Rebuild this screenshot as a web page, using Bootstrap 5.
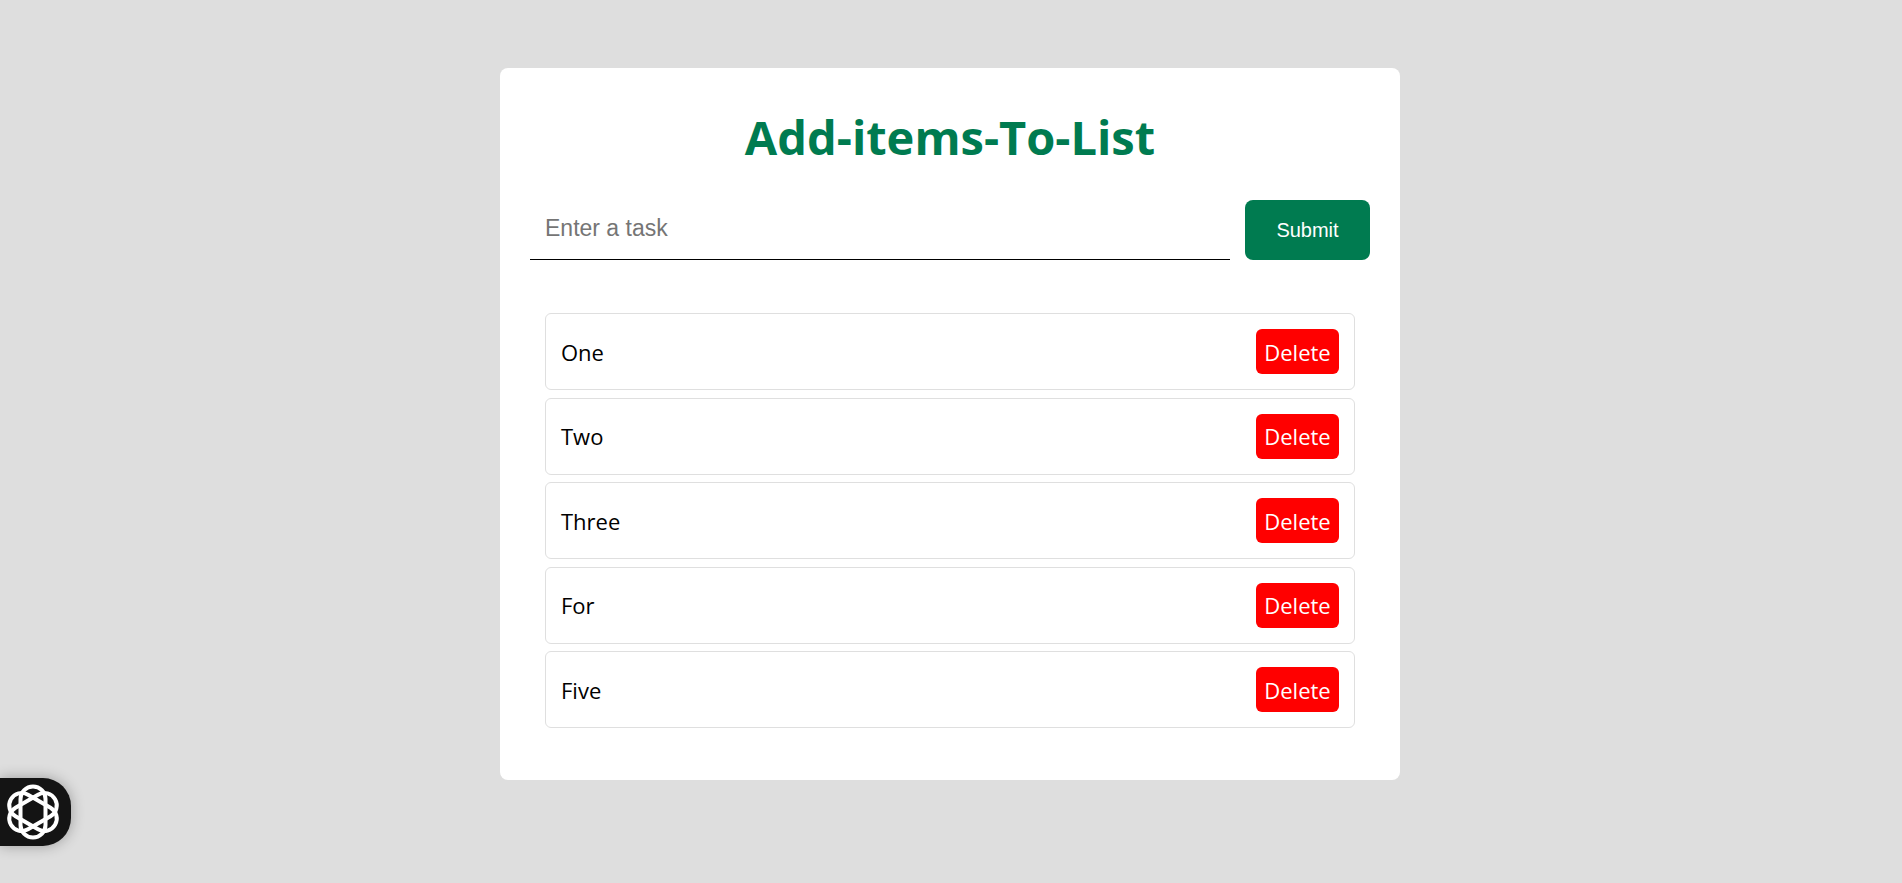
<!DOCTYPE html>
<html lang="en">
<head>
<meta charset="utf-8">
<meta name="viewport" content="width=device-width, initial-scale=1">
<title>Add-items-To-List</title>
<link href="https://cdn.jsdelivr.net/npm/bootstrap@5.3.0/dist/css/bootstrap.min.css" rel="stylesheet">
<style>
  body { background: #dedede; color: #000; font-family: "Open Sans", sans-serif; padding-right: 2px; }
  .todo-panel { max-width: 900px; margin-top: 68px; padding: 38px 30px 52px; border-radius: 8px; }
  .todo-title { color: #007b50; font-size: 47px; line-height: 62px; margin-bottom: 32px; }
  .todo-form { gap: 15px; margin-bottom: 53px; }
  .todo-input { height: 60px; padding: 0 15px 2px; border: 0; border-bottom: 1px solid #000; border-radius: 0; font: 23px "Liberation Sans", sans-serif; }
  .todo-input:focus { box-shadow: none; border-color: #000; }
  .todo-input::placeholder { color: #757575; }
  .todo-submit { width: 125px; height: 60px; border: 0; border-radius: 8px; background: #007b50; color: #fff; font: 20px "Liberation Sans", sans-serif; }
  .todo-items { min-height: 415px; margin: 0 15px; font-size: 22px; line-height: 32px; }
  .todo-item { height: 77px; padding: 0 15px; border: 1px solid #dfdfdf; border-radius: 6px; }
  .todo-delete { width: 83px; height: 45px; padding: 0; border: 0; border-radius: 6px; background: #f00; color: #fff; }
  .side-tab { bottom: 37px; width: 71px; height: 68px; padding-left: 5px; border: 0; border-radius: 0 28px 28px 0; background: #141414; box-shadow: 0 0 14px rgba(0, 0, 0, .3); }
</style>
</head>
<body>
<main class="todo-panel bg-white mx-auto">
  <h1 class="todo-title text-center fw-bold">Add-items-To-List</h1>
  <form class="todo-form d-flex">
    <input type="text" class="todo-input form-control flex-fill" placeholder="Enter a task" aria-label="Enter a task">
    <button type="submit" class="todo-submit flex-shrink-0">Submit</button>
  </form>
  <ul class="todo-items list-unstyled d-flex flex-column justify-content-between">
    <li class="todo-item d-flex align-items-center justify-content-between"><span>One</span><button type="button" class="todo-delete">Delete</button></li>
    <li class="todo-item d-flex align-items-center justify-content-between"><span>Two</span><button type="button" class="todo-delete">Delete</button></li>
    <li class="todo-item d-flex align-items-center justify-content-between"><span>Three</span><button type="button" class="todo-delete">Delete</button></li>
    <li class="todo-item d-flex align-items-center justify-content-between"><span>For</span><button type="button" class="todo-delete">Delete</button></li>
    <li class="todo-item d-flex align-items-center justify-content-between"><span>Five</span><button type="button" class="todo-delete">Delete</button></li>
  </ul>
</main>
<button type="button" class="side-tab position-fixed start-0 d-flex align-items-center" aria-label="Assistant">
  <svg width="56" height="56" viewBox="-28 -28 56 56" fill="none" stroke="#fff" stroke-width="4" aria-hidden="true">
    <rect x="-12.5" y="-25.5" width="25" height="51" rx="12.5"/>
    <rect x="-12.5" y="-25.5" width="25" height="51" rx="12.5" transform="rotate(60)"/>
    <rect x="-12.5" y="-25.5" width="25" height="51" rx="12.5" transform="rotate(-60)"/>
  </svg>
</button>
<script src="https://cdn.jsdelivr.net/npm/bootstrap@5.3.0/dist/js/bootstrap.bundle.min.js"></script>
</body>
</html>
